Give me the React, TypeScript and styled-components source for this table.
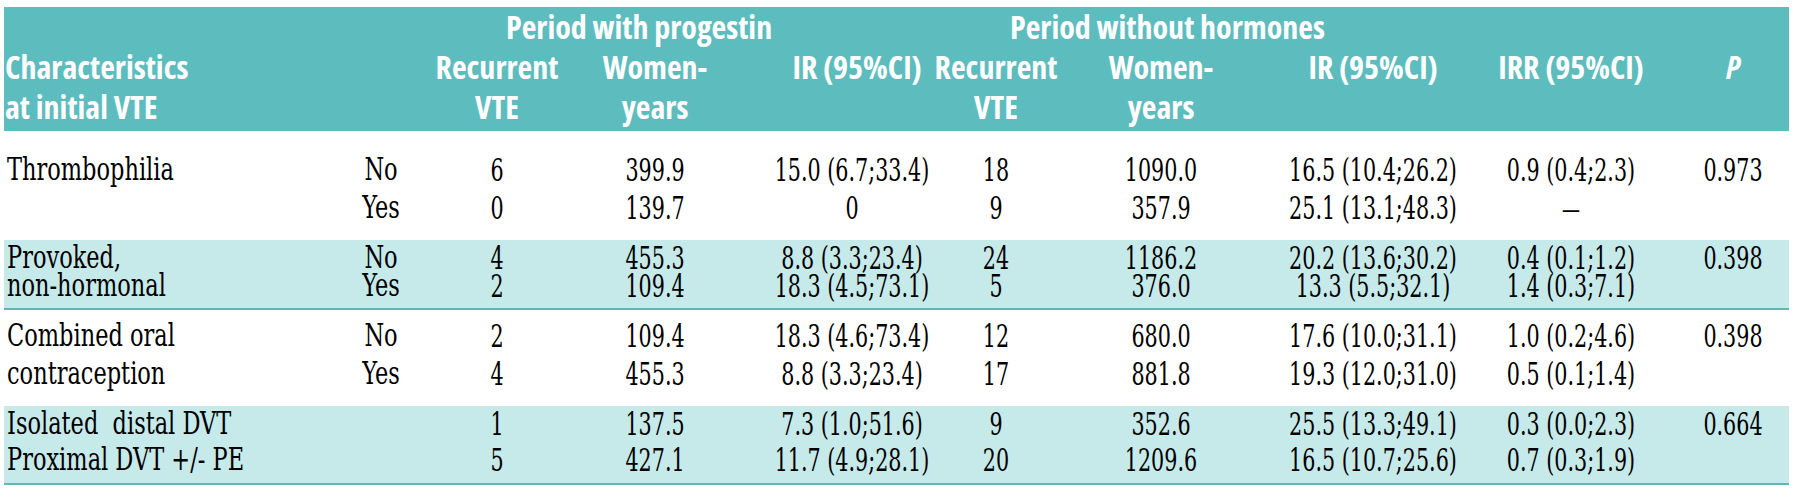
import React from "react";
import styled, { createGlobalStyle } from "styled-components";

const COLS =
  "331px 92px 140px 176px 218px 70px 260px 164px 232px 92px";

const Global = createGlobalStyle`
  html, body { margin: 0; padding: 0; background: #ffffff; }
`;

const Page = styled.div`
  padding: 7px 0 0 4px;
`;

const Table = styled.div`
  width: 1785px;
  display: flex;
  flex-direction: column;
`;

const Head = styled.div`
  display: grid;
  grid-template-columns: ${COLS};
  grid-template-rows: 40px auto;
  background: #5dbdbe;
  color: #ffffff;
  font-family: "Open Sans", "DejaVu Sans Condensed", sans-serif;
  font-weight: 700;
  font-stretch: 75%;
  font-size: 32px;
  line-height: 40px;
  padding-bottom: 4px;
  padding-right: 10px;
`;

const SpanHead = styled.div<{ $col: number; $indent: number }>`
  grid-row: 1;
  grid-column: ${(p) => p.$col} / span 3;
  padding-left: ${(p) => p.$indent}px;
  white-space: nowrap;
`;

const HeadCell = styled.div<{ $col: number; $left?: boolean; $italic?: boolean; $shift?: number }>`
  grid-row: 2;
  grid-column: ${(p) => p.$col};
  display: flex;
  flex-direction: column;
  align-items: ${(p) => (p.$left ? "flex-start" : "center")};
  padding-left: ${(p) => (p.$left ? 1 : p.$shift ?? 0)}px;
  font-style: ${(p) => (p.$italic ? "italic" : "normal")};
  min-width: 0;
  white-space: nowrap;
`;

const Group = styled.div<{ $band?: boolean; $lh: number; $pt: number; $pb: number }>`
  display: grid;
  grid-template-columns: ${COLS};
  background: ${(p) => (p.$band ? "#c6e9ea" : "#ffffff")};
  border-bottom: ${(p) => (p.$band ? "2px solid #5db8b9" : "0")};
  padding: ${(p) => p.$pt}px 10px ${(p) => p.$pb}px 0;
  font-family: "DejaVu Serif Condensed", "DejaVu Serif", serif;
  font-size: 23px;
  line-height: ${(p) => p.$lh}px;
  color: #000000;
`;

const Cell = styled.div<{ $left?: boolean; $text?: boolean }>`
  display: flex;
  flex-direction: column;
  align-items: ${(p) => (p.$left ? "flex-start" : "center")};
  padding-left: ${(p) => (p.$left ? "3px" : "0")};
  font-size: ${(p) => (p.$text ? "25px" : "23px")};
  min-width: 0;
  white-space: pre;
`;

const Line = styled.div<{ $text?: boolean }>`
  transform: scaleY(${(p) => (p.$text ? 1.26 : 1.37)});
  transform-origin: center;
`;

const Dash = styled.span`
  font-size: 20px;
`;

type Row = {
  band?: boolean;
  lh: number;
  pt: number;
  pb: number;
  cells: string[][];
};

const rows: Row[] = [
  {
    lh: 38,
    pt: 20,
    pb: 12,
    cells: [
      ["Thrombophilia"],
      ["No", "Yes"],
      ["6", "0"],
      ["399.9", "139.7"],
      ["15.0 (6.7;33.4)", "0"],
      ["18", "9"],
      ["1090.0", "357.9"],
      ["16.5 (10.4;26.2)", "25.1 (13.1;48.3)"],
      ["0.9 (0.4;2.3)", "—"],
      ["0.973"],
    ],
  },
  {
    band: true,
    lh: 28,
    pt: 4,
    pb: 8,
    cells: [
      ["Provoked,", "non-hormonal"],
      ["No", "Yes"],
      ["4", "2"],
      ["455.3", "109.4"],
      ["8.8 (3.3;23.4)", "18.3 (4.5;73.1)"],
      ["24", "5"],
      ["1186.2", "376.0"],
      ["20.2 (13.6;30.2)", "13.3 (5.5;32.1)"],
      ["0.4 (0.1;1.2)", "1.4 (0.3;7.1)"],
      ["0.398"],
    ],
  },
  {
    lh: 38,
    pt: 7,
    pb: 13,
    cells: [
      ["Combined oral", "contraception"],
      ["No", "Yes"],
      ["2", "4"],
      ["109.4", "455.3"],
      ["18.3 (4.6;73.4)", "8.8 (3.3;23.4)"],
      ["12", "17"],
      ["680.0", "881.8"],
      ["17.6 (10.0;31.1)", "19.3 (12.0;31.0)"],
      ["1.0 (0.2;4.6)", "0.5 (0.1;1.4)"],
      ["0.398"],
    ],
  },
  {
    band: true,
    lh: 36,
    pt: 0,
    pb: 5,
    cells: [
      ["Isolated  distal DVT", "Proximal DVT +/- PE"],
      [],
      ["1", "5"],
      ["137.5", "427.1"],
      ["7.3 (1.0;51.6)", "11.7 (4.9;28.1)"],
      ["9", "20"],
      ["352.6", "1209.6"],
      ["25.5 (13.3;49.1)", "16.5 (10.7;25.6)"],
      ["0.3 (0.0;2.3)", "0.7 (0.3;1.9)"],
      ["0.664"],
    ],
  },
];

const heads: { col: number; lines: string[]; left?: boolean; italic?: boolean; shift?: number }[] = [
  { col: 1, lines: ["Characteristics", "at initial VTE"], left: true },
  { col: 3, lines: ["Recurrent", "VTE"] },
  { col: 4, lines: ["Women-", "years"] },
  { col: 5, lines: ["IR (95%CI)"], shift: 10 },
  { col: 6, lines: ["Recurrent", "VTE"] },
  { col: 7, lines: ["Women-", "years"] },
  { col: 8, lines: ["IR (95%CI)"] },
  { col: 9, lines: ["IRR (95%CI)"] },
  { col: 10, lines: ["P"], italic: true },
];

export default function App() {
  return (
    <>
      <Global />
      <Page>
        <Table>
          <Head>
            <SpanHead $col={3} $indent={79}>
              Period with progestin
            </SpanHead>
            <SpanHead $col={6} $indent={49}>
              Period without hormones
            </SpanHead>
            {heads.map((h) => (
              <HeadCell
                key={h.col}
                $col={h.col}
                $left={h.left}
                $italic={h.italic}
                $shift={h.shift}
              >
                {h.lines.map((l) => (
                  <div key={l}>{l}</div>
                ))}
              </HeadCell>
            ))}
          </Head>
          {rows.map((r, i) => (
            <Group key={i} $band={r.band} $lh={r.lh} $pt={r.pt} $pb={r.pb}>
              {r.cells.map((c, j) => (
                <Cell key={j} $left={j === 0} $text={j < 2}>
                  {c.map((l, k) => (
                    <Line key={k} $text={j < 2}>
                      {l === "—" ? <Dash>—</Dash> : l}
                    </Line>
                  ))}
                </Cell>
              ))}
            </Group>
          ))}
        </Table>
      </Page>
    </>
  );
}
